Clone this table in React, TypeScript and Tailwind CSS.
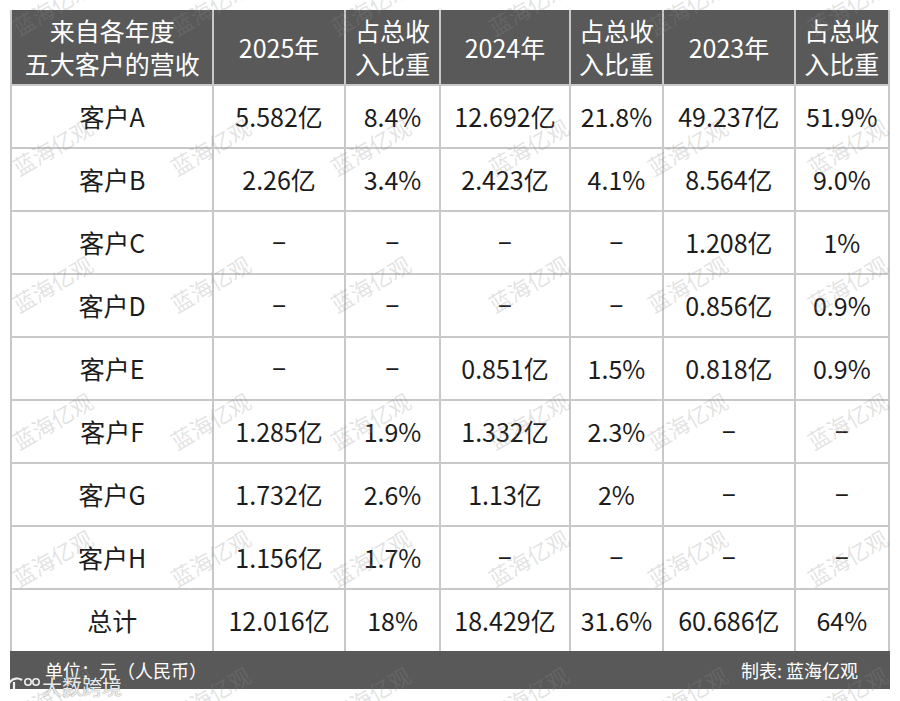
import React from 'react'

const headers: string[][] = [
  ['来自各年度', '五大客户的营收'],
  ['2025年'],
  ['占总收', '入比重'],
  ['2024年'],
  ['占总收', '入比重'],
  ['2023年'],
  ['占总收', '入比重'],
]

const D = '−'

const rows: string[][] = [
  ['客户A', '5.582亿', '8.4%', '12.692亿', '21.8%', '49.237亿', '51.9%'],
  ['客户B', '2.26亿', '3.4%', '2.423亿', '4.1%', '8.564亿', '9.0%'],
  ['客户C', D, D, D, D, '1.208亿', '1%'],
  ['客户D', D, D, D, D, '0.856亿', '0.9%'],
  ['客户E', D, D, '0.851亿', '1.5%', '0.818亿', '0.9%'],
  ['客户F', '1.285亿', '1.9%', '1.332亿', '2.3%', D, D],
  ['客户G', '1.732亿', '2.6%', '1.13亿', '2%', D, D],
  ['客户H', '1.156亿', '1.7%', D, D, D, D],
  ['总计', '12.016亿', '18%', '18.429亿', '31.6%', '60.686亿', '64%'],
]

const markX = [52, 210, 370, 528, 687, 847]
const markY = [6, 146, 283, 420, 557, 694]

const Watermarks = () => (
  <div className="pointer-events-none absolute inset-0 overflow-hidden">
    {markY.map((y) =>
      markX.map((x) => (
        <span
          key={`${x}-${y}`}
          className="absolute whitespace-nowrap text-[22px] leading-none text-[rgba(140,140,140,0.25)]"
          style={{ left: x, top: y, transform: 'translate(-50%, -50%) rotate(-30deg)' }}
        >
          蓝海亿观
        </span>
      )),
    )}
  </div>
)

const SourceLogo = () => (
  <div className="pointer-events-none absolute left-[8px] top-[674px] flex items-center text-[rgba(255,255,255,0.9)] [text-shadow:0_0_1px_rgba(80,80,80,0.9)]">
    <svg width="34" height="26" viewBox="0 0 34 26" fill="none" stroke="rgba(255,255,255,0.9)" strokeWidth="2.2">
      <path d="M14 6 A9 9 0 1 0 14 21" />
      <path d="M6 8 L6 19" />
      <circle cx="20" cy="8" r="3.2" strokeWidth="1.6" />
      <circle cx="28" cy="8" r="3.2" strokeWidth="1.6" />
    </svg>
    <span className="text-[20px] leading-none">大数跨境</span>
  </div>
)

export default function App() {
  return (
    <div className="relative h-[701px] w-[900px] bg-white font-['Noto_Sans_CJK_SC','Noto_Sans',sans-serif]">
      <div className="px-[10px] pt-[10px]">
        <div className="grid grid-cols-[204fr_132fr_95fr_130fr_93fr_132fr_94fr] gap-[2px] border-x-2 border-[#c8c8c8] bg-[#c8c8c8]">
          {headers.map((lines, i) => (
            <div
              key={i}
              className="flex h-[74px] flex-col items-center justify-center bg-[#595959] text-[25px] leading-[33px] text-white"
            >
              {lines.map((l) => (
                <span key={l}>{l}</span>
              ))}
            </div>
          ))}
          {rows.map((row) =>
            row.map((cell, j) => (
              <div
                key={`${row[0]}-${j}`}
                className="flex h-[61px] items-center justify-center bg-white text-[25px] text-[#1c1c1c]"
              >
                {cell === D ? <span className="font-['Noto_Sans',sans-serif]">{cell}</span> : cell}
              </div>
            )),
          )}
        </div>
        <div className="flex h-[38px] items-center justify-between bg-[#595959] pl-[35px] pr-[32px] text-[18px] text-white">
          <span>单位：元（人民币）</span>
          <span>制表: 蓝海亿观</span>
        </div>
      </div>
      <Watermarks />
      <SourceLogo />
    </div>
  )
}
